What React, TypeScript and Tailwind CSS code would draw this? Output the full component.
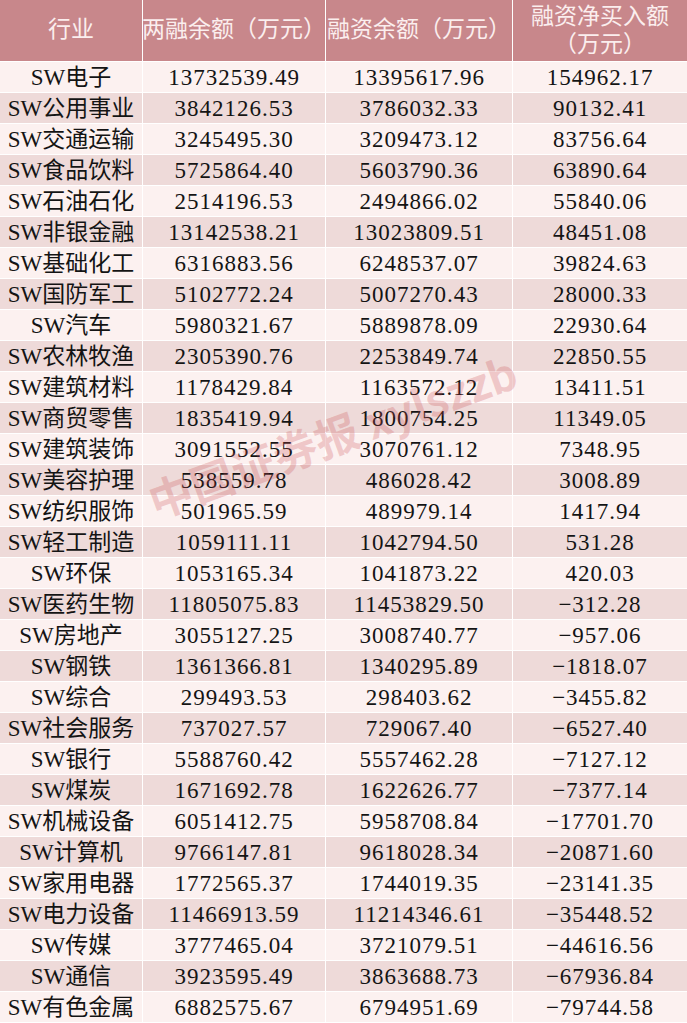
const rows: [string, string, string, string][] = [
  ["SW电子", "13732539.49", "13395617.96", "154962.17"],
  ["SW公用事业", "3842126.53", "3786032.33", "90132.41"],
  ["SW交通运输", "3245495.30", "3209473.12", "83756.64"],
  ["SW食品饮料", "5725864.40", "5603790.36", "63890.64"],
  ["SW石油石化", "2514196.53", "2494866.02", "55840.06"],
  ["SW非银金融", "13142538.21", "13023809.51", "48451.08"],
  ["SW基础化工", "6316883.56", "6248537.07", "39824.63"],
  ["SW国防军工", "5102772.24", "5007270.43", "28000.33"],
  ["SW汽车", "5980321.67", "5889878.09", "22930.64"],
  ["SW农林牧渔", "2305390.76", "2253849.74", "22850.55"],
  ["SW建筑材料", "1178429.84", "1163572.12", "13411.51"],
  ["SW商贸零售", "1835419.94", "1800754.25", "11349.05"],
  ["SW建筑装饰", "3091552.55", "3070761.12", "7348.95"],
  ["SW美容护理", "538559.78", "486028.42", "3008.89"],
  ["SW纺织服饰", "501965.59", "489979.14", "1417.94"],
  ["SW轻工制造", "1059111.11", "1042794.50", "531.28"],
  ["SW环保", "1053165.34", "1041873.22", "420.03"],
  ["SW医药生物", "11805075.83", "11453829.50", "-312.28"],
  ["SW房地产", "3055127.25", "3008740.77", "-957.06"],
  ["SW钢铁", "1361366.81", "1340295.89", "-1818.07"],
  ["SW综合", "299493.53", "298403.62", "-3455.82"],
  ["SW社会服务", "737027.57", "729067.40", "-6527.40"],
  ["SW银行", "5588760.42", "5557462.28", "-7127.12"],
  ["SW煤炭", "1671692.78", "1622626.77", "-7377.14"],
  ["SW机械设备", "6051412.75", "5958708.84", "-17701.70"],
  ["SW计算机", "9766147.81", "9618028.34", "-20871.60"],
  ["SW家用电器", "1772565.37", "1744019.35", "-23141.35"],
  ["SW电力设备", "11466913.59", "11214346.61", "-35448.52"],
  ["SW传媒", "3777465.04", "3721079.51", "-44616.56"],
  ["SW通信", "3923595.49", "3863688.73", "-67936.84"],
  ["SW有色金属", "6882575.67", "6794951.69", "-79744.58"],
];

const font = "font-['Liberation_Serif','Noto_Sans_CJK_SC',serif]";

function Num({ v }: { v: string }) {
  return <span className="tracking-[1px]">{v.replace("-", "−")}</span>;
}

export default function App() {
  return (
    <div className={`relative w-[687px] h-[1023px] overflow-hidden bg-white ${font}`}>
      <div className="grid grid-cols-[142px_182px_186px_1fr] gap-[1px] bg-white">
        {["行业", "两融余额（万元）", "融资余额（万元）"].map((h) => (
          <div
            key={h}
            className="h-[61px] bg-[#c8878b] text-[#fbeeee] text-[23px] flex items-center justify-center whitespace-nowrap"
          >
            {h}
          </div>
        ))}
        <div className="h-[61px] bg-[#c8878b] text-[#fbeeee] text-[23px] leading-[28px] flex flex-col items-center justify-center">
          <div>融资净买入额</div>
          <div>（万元）</div>
        </div>
        {rows.map((r, i) => {
          const bg = i % 2 === 0 ? "bg-[#fcf1f0]" : "bg-[#eedad9]";
          return r.map((c, j) => (
            <div
              key={`${i}-${j}`}
              className={`h-[30px] ${bg} text-[#141414] text-[23px] leading-[31px] text-center whitespace-nowrap`}
            >
              {j === 0 ? c : <Num v={c} />}
            </div>
          ));
        })}
      </div>
      {/* 水印 */}
      <div className="absolute left-[112px] top-[410px] w-[440px] -rotate-[20deg] text-center whitespace-nowrap font-['Noto_Sans_CJK_SC',sans-serif] font-bold text-[44px] leading-[50px] text-[#c84b50]/25 pointer-events-none">
        中国证券报 xylszzb
      </div>
    </div>
  );
}
